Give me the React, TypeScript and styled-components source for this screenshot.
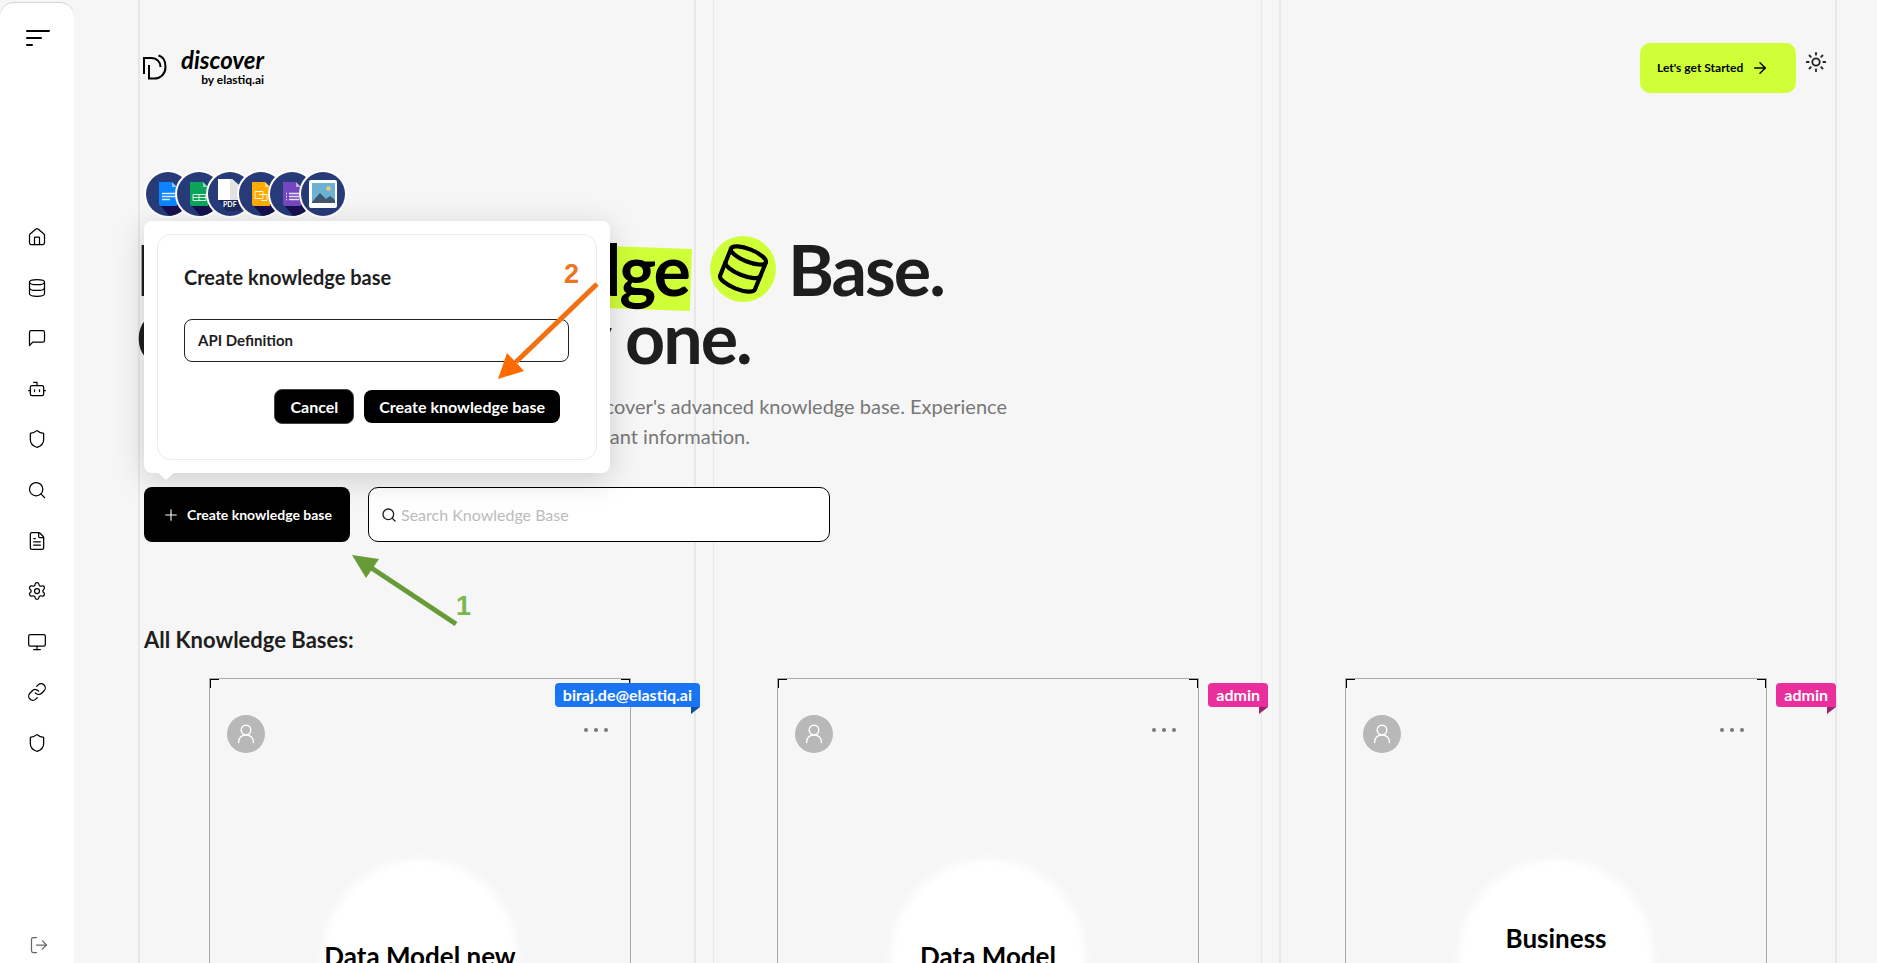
import React from "react";
import styled, { createGlobalStyle } from "styled-components";
import {
  House, Database, Bot, Shield, Search, FileText, Settings, Monitor, Link, LogOut, ArrowRight, Sun, Plus,
} from "lucide-react";

const Global = createGlobalStyle`
  * { box-sizing: border-box; }
  html, body { margin: 0; height: 100%; }
  body { background: #f6f6f6; color: #1e1e1e; font-family: Lato, "Liberation Sans", sans-serif; overflow: hidden; }
  button, input { font: inherit; color: inherit; }
  h1, h2, h3, p { margin: 0; font-weight: 700; }
`;

const Shell = styled.div`
  display: flex;
  height: 100vh;
  overflow: hidden;
`;

const Sidebar = styled.nav`
  flex: 0 0 74px;
  margin-top: 3px;
  background: #fff;
  border-radius: 14px 14px 0 0;
  box-shadow: 0 -1px 0 #d4d4d4;
  display: flex;
  flex-direction: column;
  align-items: center;
  color: #000;
`;

const IconButton = styled.button`
  display: flex;
  border: 0;
  padding: 0;
  background: none;
  color: inherit;
`;

const MenuToggle = styled(IconButton)`
  margin: 26px 0 0 2px;
`;

const NavList = styled.div`
  height: 526px;
  margin: 180px 0 auto;
  display: flex;
  flex-direction: column;
  justify-content: space-between;
`;

const NavLink = styled.a`
  display: flex;
  color: inherit;
`;

const Logout = styled(IconButton)`
  margin: 0 0 8px 4px;
  color: #666;
`;

const Main = styled.main`
  position: relative;
  flex: 1;
  min-width: 0;
  padding: 43px 41px 0 70px;
`;

const Guides = styled.div`
  position: absolute;
  inset: 0 40px 0 64px;
  display: grid;
  grid-template-columns: 558fr 549fr 558fr;
  gap: 17px;
`;

const Guide = styled.div<{ $thin?: boolean }>`
  border: solid #e8e8e8;
  border-width: ${(p) => (p.$thin ? "0 1px" : "0 2px")};
`;

const Content = styled.div`
  position: relative;
`;

const Header = styled.header`
  display: flex;
  align-items: flex-start;
  justify-content: space-between;
  height: 127px;
`;

const Brand = styled.div`
  display: flex;
  align-items: flex-start;
  gap: 13px;
  padding-top: 4px;
  color: #000;
`;

const BrandMark = styled.svg`
  margin: 7px 0 0 -2px;
`;

const BrandText = styled.div`
  display: flex;
  flex-direction: column;
  align-items: flex-end;
`;

const BrandName = styled.span`
  font-size: 24px;
  line-height: 26px;
  font-style: italic;
  font-weight: 700;
`;

const BrandBy = styled.span`
  font-size: 12px;
  line-height: 14px;
  font-weight: 700;
`;

const HeaderActions = styled.div`
  display: flex;
  align-items: flex-start;
  gap: 9px;
  padding-right: 9px;
  & > ${IconButton} { margin-top: 8px; }
`;

const StartButton = styled.button`
  width: 156px;
  height: 50px;
  display: flex;
  align-items: center;
  gap: 8px;
  padding: 0 17px 1px;
  border: 0;
  border-radius: 10px;
  background: #cfff37;
  color: #000;
  font-size: 12px;
  font-weight: 700;
  white-space: nowrap;
`;

const FileTypes = styled.div`
  display: flex;
  height: 48px;
  & > svg + svg { margin-left: -17px; }
`;

const Title = styled.h1`
  margin: 17px 0 0 -8px;
  font-size: 70px;
  line-height: 68px;
  letter-spacing: -2px;
  color: #1e1e1e;
`;

const TitleLine = styled.div`
  display: flex;
  align-items: center;
  white-space: nowrap;
`;

const Lead = styled.span<{ $width: number }>`
  flex: 0 0 ${(p) => p.$width}px;
  display: flex;
  justify-content: space-between;
`;

const Marked = styled.span`
  position: relative;
  z-index: 0;
  color: #000;
  &::before {
    content: "";
    position: absolute;
    z-index: -1;
    inset: 8px -2px -2px -8px;
    background: #cfff37;
    transform: rotate(2deg);
  }
`;

const TitleBadge = styled.span`
  display: grid;
  place-items: center;
  width: 66px;
  height: 66px;
  margin: 0 12px 0 21px;
  border-radius: 50%;
  background: #cfff37;
  color: #000;
  & > svg { transform: rotate(22deg); }
`;

const Intro = styled.p`
  margin-top: 20px;
  color: #777;
  font-size: 20px;
  line-height: 30px;
  font-weight: 400;
`;

const IntroLine = styled.span<{ $width: number }>`
  display: block;
  width: ${(p) => p.$width}px;
  text-align: right;
  white-space: nowrap;
`;

const Actions = styled.div`
  position: relative;
  display: flex;
  gap: 18px;
  margin-top: 36px;
`;

const CreateButton = styled.button`
  width: 206px;
  height: 55px;
  display: flex;
  align-items: center;
  justify-content: center;
  gap: 7px;
  border: 0;
  border-radius: 8px;
  background: #000;
  color: #fff;
  font-size: 14px;
  font-weight: 700;
  white-space: nowrap;
`;

const SearchBox = styled.label`
  width: 462px;
  height: 55px;
  display: flex;
  align-items: center;
  gap: 4px;
  padding: 0 12px;
  border: 1px solid #000;
  border-radius: 10px;
  background: #fff;
  & > input {
    flex: 1;
    min-width: 0;
    padding: 0;
    border: 0;
    outline: 0;
    background: none;
    font-size: 16px;
  }
  & > input::placeholder { color: #bbb; opacity: 1; }
`;

const Popover = styled.div`
  position: absolute;
  z-index: 2;
  left: 0;
  bottom: 69px;
  width: 466px;
  padding: 13px;
  border-radius: 8px;
  background: #fff;
  box-shadow: 0 6px 30px rgba(0, 0, 0, 0.17);
  &::after {
    content: "";
    position: absolute;
    left: 14px;
    top: 100%;
    border: solid transparent;
    border-width: 7px 8px 0;
    border-top-color: #fff;
  }
`;

const CreateForm = styled.form`
  height: 226px;
  padding: 30px 27px 0 26px;
  border: 1px solid #ececec;
  border-radius: 14px;
`;

const FormTitle = styled.label`
  display: block;
  font-size: 20px;
  line-height: 24px;
  font-weight: 700;
`;

const NameInput = styled.input`
  display: block;
  width: 100%;
  height: 43px;
  margin-top: 30px;
  padding: 0 13px 2px;
  border: 1px solid #222;
  border-radius: 8px;
  background: #fff;
  font-size: 15px;
  font-weight: 700;
`;

const FormActions = styled.div`
  display: flex;
  align-items: center;
  justify-content: flex-end;
  gap: 10px;
  margin: 27px 9px 0 0;
`;

const FormButton = styled.button<{ $outlined?: boolean }>`
  height: ${(p) => (p.$outlined ? 35 : 33)}px;
  padding: 0 15px 1px;
  border: ${(p) => (p.$outlined ? "1px solid #444" : "0")};
  border-radius: 8px;
  background: #000;
  color: #fff;
  font-size: 16px;
  font-weight: 700;
  white-space: nowrap;
`;

const SectionTitle = styled.h2`
  margin: 84px 0 25px;
  font-size: 22px;
  line-height: 27px;
`;

const Cards = styled.section`
  display: grid;
  grid-template-columns: repeat(3, 1fr);
  gap: 8px;
  margin-left: -4px;
`;

const CardCell = styled.div`
  position: relative;
  padding: 0 69px;
`;

const Card = styled.article`
  position: relative;
  height: 420px;
  padding: 36px 17px 0;
  border: 1px solid #a8a8a8;
  &::before, &::after {
    content: "";
    position: absolute;
    top: 0;
    width: 8px;
    height: 8px;
    border: solid #000;
  }
  &::before { left: 0; border-width: 1px 0 0 1px; }
  &::after { right: 0; border-width: 1px 1px 0 0; }
`;

const CardTop = styled.div`
  display: flex;
  justify-content: space-between;
  align-items: flex-start;
`;

const Avatar = styled.span`
  display: grid;
  place-items: center;
  width: 38px;
  height: 38px;
  border-radius: 50%;
  background: #b8b8b8;
`;

const MoreButton = styled(IconButton)`
  margin: 12px 4px 0 0;
`;

const CardBody = styled.div`
  position: relative;
  width: 194px;
  height: 194px;
  margin: 106px auto 0;
  display: grid;
  place-items: center;
  text-align: center;
  &::before {
    content: "";
    position: absolute;
    inset: 0;
    border-radius: 50%;
    background: #fff;
    filter: blur(5px);
  }
`;

const CardTitle = styled.h3`
  position: relative;
  color: #000;
  font-size: 26px;
  line-height: 36px;
  white-space: nowrap;
`;

const Ribbon = styled.span<{ $color: string; $fold: string }>`
  position: absolute;
  top: 5px;
  right: 0;
  height: 24px;
  padding: 0 8px;
  border-radius: 4px 4px 0 4px;
  background: ${(p) => p.$color};
  color: #fff;
  font-size: 16px;
  line-height: 23px;
  font-weight: 700;
  &::after {
    content: "";
    position: absolute;
    right: 0;
    top: 100%;
    border: solid transparent;
    border-width: 7px 9px 0 0;
    border-top-color: ${(p) => p.$fold};
  }
`;

const Callout = styled.svg<{ $left: number; $top: number }>`
  position: absolute;
  z-index: 3;
  left: ${(p) => p.$left}px;
  top: ${(p) => p.$top}px;
  overflow: visible;
  pointer-events: none;
  font-family: "Liberation Sans", sans-serif;
  font-size: 27px;
  font-weight: 700;
`;

const ChatIcon = () => (
  <svg width="20" height="20" viewBox="0 0 24 24" fill="none" stroke="currentColor" strokeWidth="1.5" strokeLinejoin="round">
    <path d="M21 15a2 2 0 0 1-2 2H7l-4 4V5a2 2 0 0 1 2-2h14a2 2 0 0 1 2 2z" />
  </svg>
);

const navIcons = [House, Database, ChatIcon, Bot, Shield, Search, FileText, Settings, Monitor, Link, Shield];
const navNames = ["Home", "Knowledge bases", "Chat", "Agents", "Security", "Search", "Documents", "Settings", "Display", "Connections", "Privacy"];

const sheet = (color: string, detail: React.ReactNode) => (
  <>
    <path d="M15 34h19l8 8-9 8h-4z" fill="#16104f" />
    <path d="M15 12h13l5 5v19H17a2 2 0 0 1-2-2z" fill={color} />
    <path d="M28 12l5 5h-5z" fill="#fff" opacity=".55" />
    <g fill="none" stroke="#fff" strokeWidth="1" opacity=".85">{detail}</g>
  </>
);

const fileKinds: React.ReactNode[] = [
  sheet("#0a84ff", <path d="M18 23.500h14M18 26.500h14M18 29.500h8" strokeWidth="1.300" />),
  sheet("#0aa55a", <path d="M18 24.500h13v6H18zM18 27.500h13M24 24.500v6" />),
  <>
    <path d="M12 9h14l8 7v14H12z" fill="#fff" />
    <path d="M24 9h2l8 7v14H24z" fill="#e2e2e0" />
    <path d="M13 30h22v11H20z" fill="#1c2a5e" />
    <text x="17" y="37" fontSize="7" fontWeight="700" fill="#fff">PDF</text>
  </>,
  sheet("#ffab00", <path d="M18 21.500h8v7h-8zM22 24.500h8v6h-6" />),
  sheet("#7447c0", <path d="M18 23.500h1M21 23.500h10M18 26.500h1M21 26.500h10M18 29.500h1M21 29.500h10" strokeWidth="1.300" />),
  <>
    <rect x="10" y="10" width="28" height="28" rx="2" fill="#fff" />
    <rect x="13" y="13" width="23" height="20" fill="#6cb0d4" />
    <circle cx="29.500" cy="18.500" r="2.300" fill="#e8cf73" />
    <path d="M13 32l8-9 6 6 4-3 5 4v3H13z" fill="#41566f" />
  </>,
];

const cards = [
  { owner: "biraj.de@elastiq.ai", color: "#1a75f5", fold: "#0f4f9e", lines: ["Data Model new"] },
  { owner: "admin", color: "#ea2e9b", fold: "#9a256e", lines: ["Data Model"] },
  { owner: "admin", color: "#ea2e9b", fold: "#9a256e", lines: ["Business", "Glossary"] },
];

export default function App() {
  return (
    <Shell>
      <Global />
      <Sidebar>
        <MenuToggle aria-label="Menu">
          <svg width="26" height="18" fill="none" stroke="currentColor" strokeWidth="2" strokeLinecap="round">
            <path d="M2 2h22M2 9h14M2 16h5" />
          </svg>
        </MenuToggle>
        <NavList>
          {navIcons.map((Icon, i) => (
            <NavLink href="#" key={i} aria-label={navNames[i]}>
              <Icon size={20} strokeWidth={1.5} />
            </NavLink>
          ))}
        </NavList>
        <Logout aria-label="Log out"><LogOut size={20} strokeWidth={1.5} /></Logout>
      </Sidebar>

      <Main>
        <Guides>
          <Guide />
          <Guide $thin />
          <Guide />
        </Guides>
        <Content>
          <Header>
            <Brand>
              <BrandMark width="26" height="26" viewBox="0 0 26 26" fill="none" stroke="currentColor" strokeWidth="2">
                <path d="M2 20V4h7c6 0 9.500 4 9.500 9" />
                <path d="M7 11v13.500h5c7 0 11.500-5 11.500-11.500C23.500 7 21 2.500 16.500 1.500" />
              </BrandMark>
              <BrandText>
                <BrandName>discover</BrandName>
                <BrandBy>by elastiq.ai</BrandBy>
              </BrandText>
            </Brand>
            <HeaderActions>
              <StartButton>
                Let's get Started
                <ArrowRight size={18} strokeWidth={2} />
              </StartButton>
              <IconButton aria-label="Toggle theme"><Sun size={22} strokeWidth={2} color="#222" /></IconButton>
            </HeaderActions>
          </Header>

          <FileTypes>
            {fileKinds.map((art, i) => (
              <svg key={i} width="48" height="48" viewBox="0 0 48 48">
                <clipPath id={`disc${i}`}><circle cx="24" cy="24" r="22" /></clipPath>
                <circle cx="24" cy="24" r="24" fill="#fff" />
                <g clipPath={`url(#disc${i})`}>
                  <rect width="48" height="48" fill="#263b78" />
                  {art}
                </g>
              </svg>
            ))}
          </FileTypes>

          <Title>
            <TitleLine>
              <Lead $width={553}><span>Build</span><Marked>Knowledge</Marked></Lead>
              <TitleBadge><Database size={50} strokeWidth={2} /></TitleBadge>
              Base.
            </TitleLine>
            <TitleLine>
              <Lead $width={474}><span>Choose</span><span>any</span></Lead>
              &nbsp;one.
            </TitleLine>
          </Title>

          <Intro>
            <IntroLine $width={863}>Unlock the power of Discover's advanced knowledge base. Experience</IntroLine>
            <IntroLine $width={606}>instant access to relevant information.</IntroLine>
          </Intro>

          <Actions>
            <CreateButton><Plus size={18} strokeWidth={1.5} />Create knowledge base</CreateButton>
            <SearchBox>
              <Search size={16} strokeWidth={2} />
              <input type="search" placeholder="Search Knowledge Base" aria-label="Search Knowledge Base" />
            </SearchBox>
            <Popover>
              <CreateForm onSubmit={(e) => e.preventDefault()}>
                <FormTitle htmlFor="kb-name">Create knowledge base</FormTitle>
                <NameInput id="kb-name" defaultValue="API Definition" />
                <FormActions>
                  <FormButton type="button" $outlined>Cancel</FormButton>
                  <FormButton type="submit">Create knowledge base</FormButton>
                </FormActions>
              </CreateForm>
            </Popover>
            <Callout $left={354} $top={-226} width="104" height="120">
              <path d="M99 23L18 101" stroke="#f2700f" strokeWidth="5" />
              <path d="M0 118L9 92l17 18z" fill="#ff6a00" />
              <text x="66" y="22" fill="#ee7420">2</text>
            </Callout>
            <Callout $left={208} $top={68} width="120" height="72">
              <path d="M104 69L18 12" stroke="#659c37" strokeWidth="5" />
              <path d="M0 0l27 4-13 19z" fill="#659c37" />
              <text x="104" y="60" fill="#77b94c">1</text>
            </Callout>
          </Actions>

          <SectionTitle>All Knowledge Bases:</SectionTitle>

          <Cards>
            {cards.map((card, i) => (
              <CardCell key={i}>
                <Card>
                  <CardTop>
                    <Avatar>
                      <svg width="18" height="20" fill="none" stroke="#fff" strokeWidth="1.5" viewBox="0 0 18 20">
                        <circle cx="9" cy="6" r="4.800" />
                        <path d="M1.500 19c0-5 3-8 7.500-8s7.500 3 7.500 8" />
                      </svg>
                    </Avatar>
                    <MoreButton aria-label="More options">
                      <svg width="26" height="6" fill="#777">
                        <circle cx="3" cy="3" r="2" /><circle cx="13" cy="3" r="2" /><circle cx="23" cy="3" r="2" />
                      </svg>
                    </MoreButton>
                  </CardTop>
                  <CardBody>
                    <CardTitle>
                      {card.lines.map((line) => <div key={line}>{line}</div>)}
                    </CardTitle>
                  </CardBody>
                </Card>
                <Ribbon $color={card.color} $fold={card.fold}>{card.owner}</Ribbon>
              </CardCell>
            ))}
          </Cards>
        </Content>
      </Main>
    </Shell>
  );
}
